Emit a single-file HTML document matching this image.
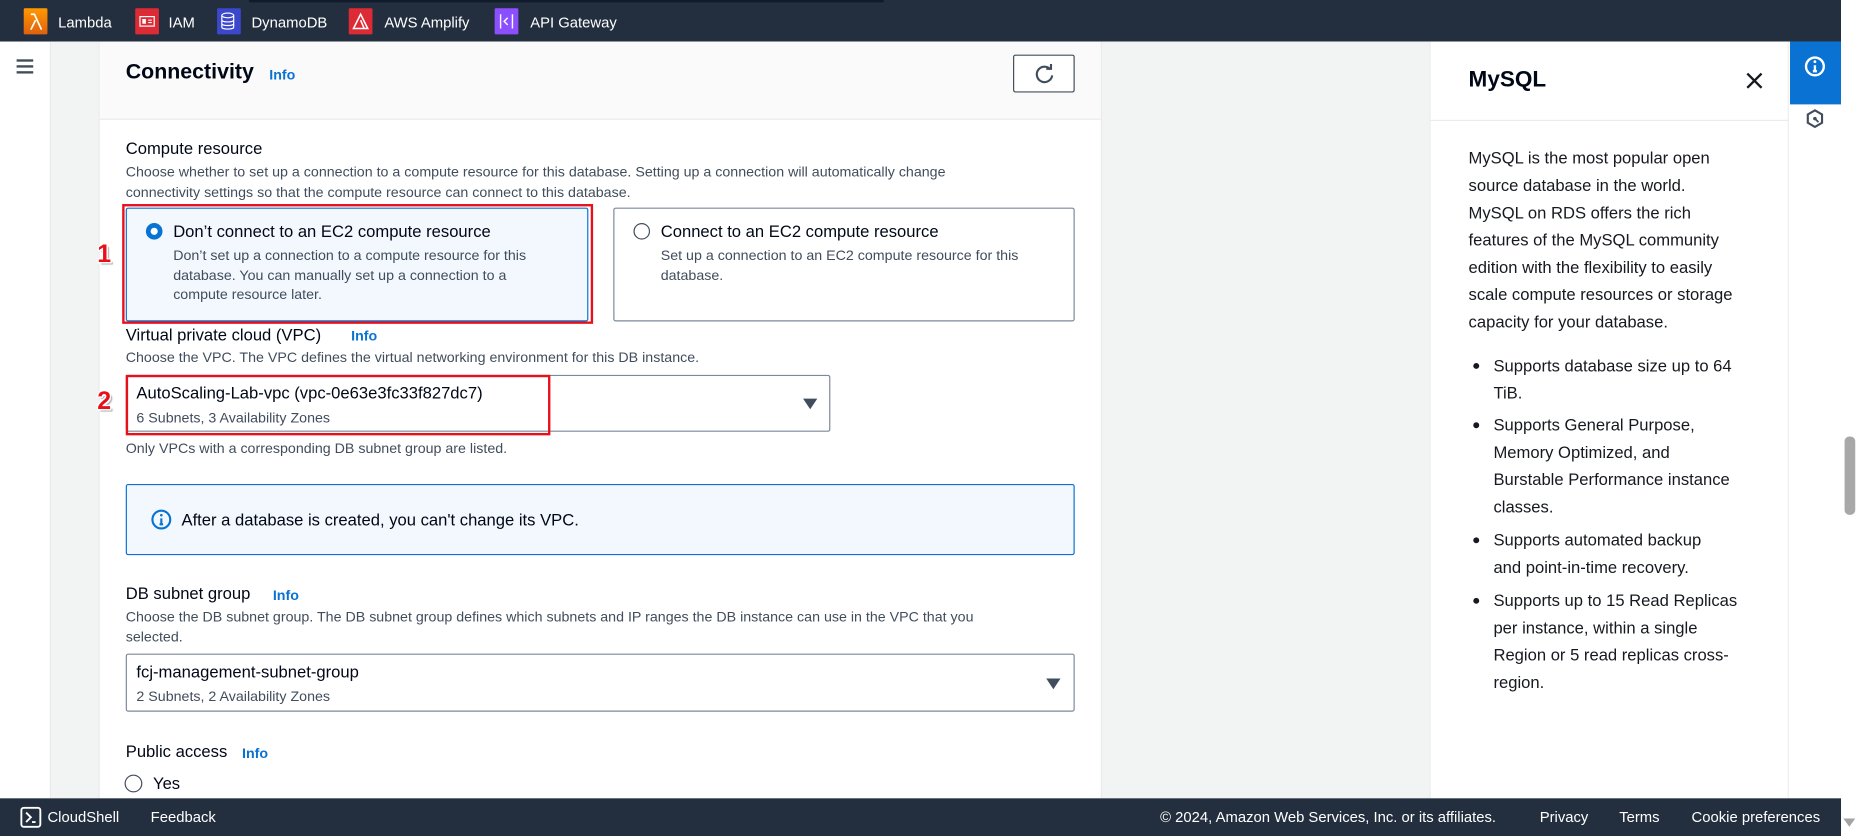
<!DOCTYPE html>
<html><head><meta charset="utf-8"><style>
*{margin:0;padding:0;box-sizing:border-box}
html,body{width:1860px;height:836px;overflow:hidden;background:#fff}
#w{position:absolute;left:0;top:0;width:1568px;height:705px;transform:scale(1.18622);transform-origin:0 0;font-family:"Liberation Sans",sans-serif;color:#000716;overflow:hidden;background:#fff}
.a{position:absolute;white-space:nowrap}
.top{left:0;top:0;width:1552px;height:35px;background:#232f3e}
.ic{position:absolute;top:7px;width:20px;height:22px;border-radius:1px}
.tt{position:absolute;top:12px;color:#fff;font-size:12.5px}
.info{color:#0972d3;font-weight:bold;font-size:12px}
.lbl{font-size:14px;color:#000716}
.desc{font-size:12px;color:#414d5c;line-height:16.5px}
.box{position:absolute;border:1px solid #7d8998;border-radius:2px}
.red{position:absolute;border:2px solid #e8101a}
.num{position:absolute;color:#e8101a;font-weight:bold;font-size:21px;text-shadow:-1px -1px 0 #fff,1px 1px 0 #fff,1px -1px 0 #fff,-1px 1px 0 #fff,2px 2px 1px #aaa}
.tri{position:absolute;width:0;height:0;border-left:6px solid transparent;border-right:6px solid transparent;border-top:9px solid #414d5c}
.help{font-size:14px;color:#16191f;line-height:23px}
.foot{left:0;top:673px;width:1552px;height:32px;background:#232f3e}
.ft{position:absolute;top:9px;color:#fff;font-size:12.5px}
</style></head><body><div id="w">
<div class="a top"></div>
<div class="a" style="left:210px;top:0;width:535px;height:2px;background:#0f1b2a"></div>
<div class="ic" style="left:20px;background:linear-gradient(#f90,#e0600f)"><svg width="20" height="22"><path d="M6 5h3l6 13M10 10l-4 8" stroke="#fff" stroke-width="1.4" fill="none"/></svg></div>
<div class="tt" style="left:49px">Lambda</div>
<div class="ic" style="left:114px;background:#dd2b35"><svg width="20" height="22"><rect x="4" y="7" width="12" height="8" stroke="#fff" fill="none"/><rect x="6" y="9" width="3" height="4" fill="#fff"/><path d="M11 10h3M11 12h3" stroke="#fff"/></svg></div>
<div class="tt" style="left:142px">IAM</div>
<div class="ic" style="left:183px;background:#3b48cc"><svg width="20" height="22"><ellipse cx="9" cy="6" rx="5" ry="2" stroke="#fff" fill="none"/><path d="M4 6v10c0 2 10 2 10 0V6M4 10c0 2 10 2 10 0M4 13c0 2 10 2 10 0" stroke="#fff" fill="none"/></svg></div>
<div class="tt" style="left:212px">DynamoDB</div>
<div class="ic" style="left:294px;background:#dd2b35"><svg width="20" height="22"><path d="M10 5l6 12H4zM10 10l3 7" stroke="#fff" stroke-width="1.3" fill="none"/></svg></div>
<div class="tt" style="left:324px">AWS Amplify</div>
<div class="ic" style="left:417px;background:#8c4fff"><svg width="20" height="22"><path d="M5 5v12M15 5v12M11 8l-3 3 3 3" stroke="#fff" stroke-width="1.2" fill="none"/></svg></div>
<div class="tt" style="left:447px">API Gateway</div>

<!-- left nav -->
<div class="a" style="left:42px;top:35px;width:42px;height:638px;background:#f2f3f3;border-left:1px solid #e9ebed;border-right:1px solid #e9ebed"></div>
<div class="a" style="left:14px;top:50px;width:14px;height:2px;background:#414d5c;box-shadow:0 5px 0 #414d5c,0 10px 0 #414d5c"></div>

<!-- main card -->
<div class="a" style="left:84px;top:35px;width:844px;height:66px;background:#fafafa;border-bottom:1px solid #e9ebed"></div>
<div class="a" style="left:928px;top:35px;width:277px;height:638px;background:#f2f3f3;border-left:1px solid #e9ebed"></div>
<div class="a" style="left:106px;top:50px;font-size:18px;font-weight:bold">Connectivity</div>
<div class="a info" style="left:227px;top:56px">Info</div>
<div class="box" style="left:854px;top:46px;width:52px;height:32px;border-color:#414d5c;background:#fff"><svg width="50" height="30"><path d="M30.5 11.5a6.5 6.5 0 1 0 1.5 5" stroke="#414d5c" stroke-width="1.8" fill="none"/><path d="M27 11h4V7" stroke="#414d5c" stroke-width="1.8" fill="none"/></svg></div>

<div class="a lbl" style="left:106px;top:117px">Compute resource</div>
<div class="a desc" style="left:106px;top:137px">Choose whether to set up a connection to a compute resource for this database. Setting up a connection will automatically change<br>connectivity settings so that the compute resource can connect to this database.</div>

<div class="box" style="left:106px;top:175px;width:390px;height:96px;background:#f2f8fd;border-color:#0972d3"></div>
<div class="a" style="left:123px;top:188px;width:14px;height:14px;border-radius:50%;border:4px solid #0972d3;background:#fff"></div>
<div class="a lbl" style="left:146px;top:187px">Don’t connect to an EC2 compute resource</div>
<div class="a desc" style="left:146px;top:207px">Don’t set up a connection to a compute resource for this<br>database. You can manually set up a connection to a<br>compute resource later.</div>
<div class="red" style="left:103px;top:172px;width:397px;height:101px"></div>
<div class="num" style="left:82px;top:203px">1</div>

<div class="box" style="left:517px;top:175px;width:389px;height:96px"></div>
<div class="a" style="left:534px;top:188px;width:14px;height:14px;border-radius:50%;border:1.5px solid #414d5c"></div>
<div class="a lbl" style="left:557px;top:187px">Connect to an EC2 compute resource</div>
<div class="a desc" style="left:557px;top:207px">Set up a connection to an EC2 compute resource for this<br>database.</div>

<div class="a lbl" style="left:106px;top:274px">Virtual private cloud (VPC)</div>
<div class="a info" style="left:296px;top:276px">Info</div>
<div class="a desc" style="left:106px;top:293px">Choose the VPC. The VPC defines the virtual networking environment for this DB instance.</div>
<div class="box" style="left:106px;top:316px;width:594px;height:48px"></div>
<div class="a lbl" style="left:115px;top:323px">AutoScaling-Lab-vpc (vpc-0e63e3fc33f827dc7)</div>
<div class="a desc" style="left:115px;top:344px">6 Subnets, 3 Availability Zones</div>
<div class="tri" style="left:677px;top:336px"></div>
<div class="red" style="left:106px;top:316px;width:358px;height:51px"></div>
<div class="num" style="left:82px;top:327px">2</div>
<div class="a desc" style="left:106px;top:370px">Only VPCs with a corresponding DB subnet group are listed.</div>

<div class="box" style="left:106px;top:408px;width:800px;height:60px;background:#f2f8fd;border-color:#0972d3"></div>
<svg class="a" style="left:127px;top:429px" width="18" height="18"><circle cx="9" cy="9" r="7.5" stroke="#0972d3" stroke-width="1.8" fill="none"/><path d="M9 8v5M7.5 13h3" stroke="#0972d3" stroke-width="1.8"/><circle cx="9" cy="5.3" r="1.1" fill="#0972d3"/></svg>
<div class="a lbl" style="left:153px;top:430px">After a database is created, you can't change its VPC.</div>

<div class="a lbl" style="left:106px;top:492px">DB subnet group</div>
<div class="a info" style="left:230px;top:495px">Info</div>
<div class="a desc" style="left:106px;top:512px">Choose the DB subnet group. The DB subnet group defines which subnets and IP ranges the DB instance can use in the VPC that you<br>selected.</div>
<div class="box" style="left:106px;top:551px;width:800px;height:49px"></div>
<div class="a lbl" style="left:115px;top:558px">fcj-management-subnet-group</div>
<div class="a desc" style="left:115px;top:579px">2 Subnets, 2 Availability Zones</div>
<div class="tri" style="left:882px;top:572px"></div>

<div class="a lbl" style="left:106px;top:625px">Public access</div>
<div class="a info" style="left:204px;top:628px">Info</div>
<div class="a" style="left:105px;top:653px;width:15px;height:15px;border-radius:50%;border:1.5px solid #414d5c"></div>
<div class="a lbl" style="left:129px;top:652px">Yes</div>

<!-- help panel -->
<div class="a" style="left:1205px;top:35px;width:303px;height:638px;background:#fff;border-left:1px solid #e9ebed;border-right:1px solid #e9ebed"></div>
<div class="a" style="left:1205px;top:101px;width:303px;height:1px;background:#e9ebed"></div>
<div class="a" style="left:1238px;top:57px;font-size:19px;font-weight:bold">MySQL</div>
<svg class="a" style="left:1471px;top:60px" width="16" height="16"><path d="M2 2l12 12M14 2L2 14" stroke="#16191f" stroke-width="2"/></svg>
<div class="a help" style="left:1238px;top:122px">MySQL is the most popular open<br>source database in the world.<br>MySQL on RDS offers the rich<br>features of the MySQL community<br>edition with the flexibility to easily<br>scale compute resources or storage<br>capacity for your database.</div>
<div class="a help" style="left:1259px;top:297px">Supports database size up to 64<br>TiB.</div>
<div class="a help" style="left:1259px;top:347px">Supports General Purpose,<br>Memory Optimized, and<br>Burstable Performance instance<br>classes.</div>
<div class="a help" style="left:1259px;top:444px">Supports automated backup<br>and point-in-time recovery.</div>
<div class="a help" style="left:1259px;top:495px">Supports up to 15 Read Replicas<br>per instance, within a single<br>Region or 5 read replicas cross-<br>region.</div>
<div class="a" style="left:1242px;top:306px;width:5px;height:5px;border-radius:50%;background:#16191f;box-shadow:0 50px 0 #16191f,0 147px 0 #16191f,0 198px 0 #16191f"></div>

<!-- right rail -->
<div class="a" style="left:1508px;top:35px;width:44px;height:638px;background:#fff"></div>
<div class="a" style="left:1509px;top:35px;width:43px;height:53px;background:#0972d3"></div>
<svg class="a" style="left:1520px;top:46px" width="20" height="20"><circle cx="10" cy="10" r="7.5" stroke="#fff" stroke-width="2" fill="none"/><path d="M10 9v5M8.3 14h3.4" stroke="#fff" stroke-width="2"/><circle cx="10" cy="6" r="1.2" fill="#fff"/></svg>
<svg class="a" style="left:1520px;top:90px" width="20" height="20"><path d="M10 3l6 3.5v7L10 17l-6-3.5v-7z" stroke="#414d5c" stroke-width="1.8" fill="none"/><circle cx="10" cy="10" r="1.5" fill="#414d5c"/><path d="M10 10l3 3" stroke="#414d5c" stroke-width="1.5"/></svg>
<!-- scrollbar -->
<div class="a" style="left:1552px;top:0;width:16px;height:705px;background:#fff"></div>
<div class="a" style="left:1555px;top:368px;width:9px;height:66px;border-radius:4px;background:#a8a8a8"></div>
<div class="a" style="left:1554px;top:690px;width:0;height:0;border-left:5px solid transparent;border-right:5px solid transparent;border-top:7px solid #a3a3a3"></div>

<!-- footer -->
<div class="a foot"></div>
<svg class="a" style="left:17px;top:680px" width="18" height="18"><rect x="1" y="1" width="16" height="16" rx="2" stroke="#fff" stroke-width="1.6" fill="none"/><path d="M5 5l4 4-4 4M10 13h3" stroke="#fff" stroke-width="1.6" fill="none"/></svg>
<div class="ft" style="left:40px;top:682px">CloudShell</div>
<div class="ft" style="left:127px;top:682px">Feedback</div>
<div class="ft" style="left:978px;top:682px">© 2024, Amazon Web Services, Inc. or its affiliates.</div>
<div class="ft" style="left:1298px;top:682px">Privacy</div>
<div class="ft" style="left:1365px;top:682px">Terms</div>
<div class="ft" style="left:1426px;top:682px">Cookie preferences</div>
</div></body></html>
